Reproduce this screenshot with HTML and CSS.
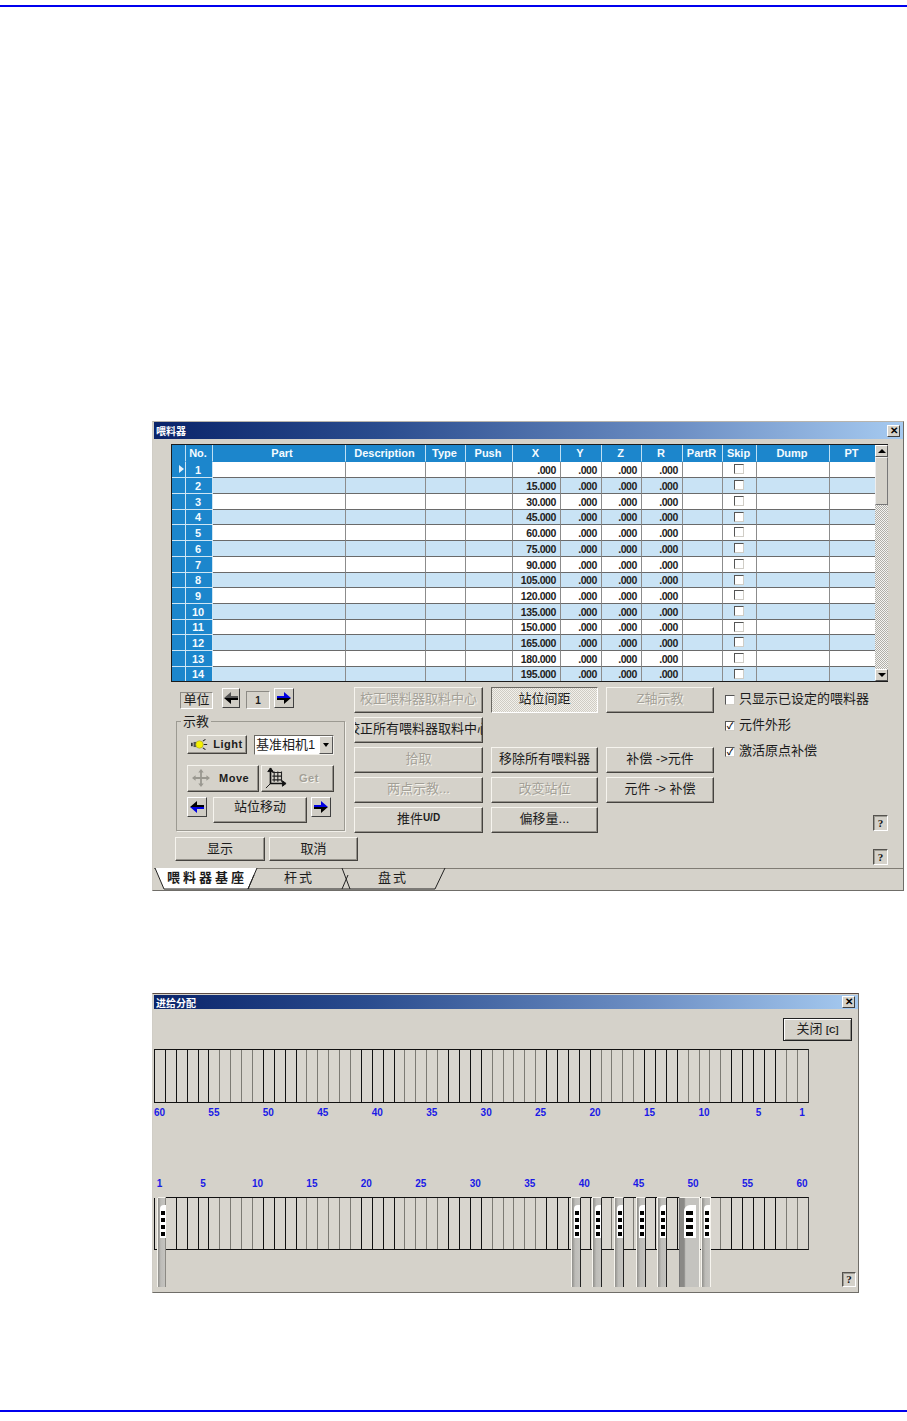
FILE: index.html
```html
<!DOCTYPE html>
<html lang="zh">
<head>
<meta charset="utf-8">
<title>喂料器</title>
<link rel="stylesheet" href="styles.css">
</head>
<body>
<svg class="sprite" width="0" height="0" aria-hidden="true">
  <symbol id="ar" viewBox="0 0 14 12"><path d="M0 4h7V0l7 6H0z" fill="#0000e0"/><path d="M0 6h14l-7 6V8H0z" fill="#000"/></symbol>
  <symbol id="al" viewBox="0 0 14 12"><path d="M14 4H7V0L0 6h14z" fill="#000"/><path d="M14 6H0l7 6V8h7z" fill="#0000e0"/></symbol>
  <symbol id="ad" viewBox="0 0 14 12"><path d="M14 4H7V0L0 6h14z" fill="#555"/><path d="M14 6H0l7 6V8h7z" fill="#000"/></symbol>
</svg>
<div class="page">
  <div class="rule rule-top"></div>

  <section class="dialog dlg-feeder">
    <header class="title title-a"><span>喂料器</span><b class="x">✕</b></header>
    <div class="tablewrap">
      <table class="tbl">
        <colgroup><col class="c0"><col class="c1"><col class="c2"><col class="c3"><col class="c4"><col class="c5"><col class="c6"><col class="c7"><col class="c8"><col class="c9"><col class="c10"><col class="c11"><col class="c12"><col class="c13"></colgroup>
        <thead><tr><th></th><th>No.</th><th class="th-part">Part</th><th>Description</th><th>Type</th><th>Push</th><th>X</th><th>Y</th><th>Z</th><th>R</th><th>PartR</th><th>Skip</th><th>Dump</th><th>PT</th></tr></thead>
        <tbody>
          <tr><td class="ind cur"></td><td class="no">1</td><td></td><td></td><td></td><td></td><td class="n">.000</td><td class="n">.000</td><td class="n">.000</td><td class="n">.000</td><td></td><td class="k"><i class="box"></i></td><td></td><td></td></tr>
          <tr><td class="ind"></td><td class="no">2</td><td></td><td></td><td></td><td></td><td class="n">15.000</td><td class="n">.000</td><td class="n">.000</td><td class="n">.000</td><td></td><td class="k"><i class="box"></i></td><td></td><td></td></tr>
          <tr><td class="ind"></td><td class="no">3</td><td></td><td></td><td></td><td></td><td class="n">30.000</td><td class="n">.000</td><td class="n">.000</td><td class="n">.000</td><td></td><td class="k"><i class="box"></i></td><td></td><td></td></tr>
          <tr class="s"><td class="ind"></td><td class="no">4</td><td></td><td></td><td></td><td></td><td class="n">45.000</td><td class="n">.000</td><td class="n">.000</td><td class="n">.000</td><td></td><td class="k"><i class="box"></i></td><td></td><td></td></tr>
          <tr><td class="ind"></td><td class="no">5</td><td></td><td></td><td></td><td></td><td class="n">60.000</td><td class="n">.000</td><td class="n">.000</td><td class="n">.000</td><td></td><td class="k"><i class="box"></i></td><td></td><td></td></tr>
          <tr><td class="ind"></td><td class="no">6</td><td></td><td></td><td></td><td></td><td class="n">75.000</td><td class="n">.000</td><td class="n">.000</td><td class="n">.000</td><td></td><td class="k"><i class="box"></i></td><td></td><td></td></tr>
          <tr><td class="ind"></td><td class="no">7</td><td></td><td></td><td></td><td></td><td class="n">90.000</td><td class="n">.000</td><td class="n">.000</td><td class="n">.000</td><td></td><td class="k"><i class="box"></i></td><td></td><td></td></tr>
          <tr class="s"><td class="ind"></td><td class="no">8</td><td></td><td></td><td></td><td></td><td class="n">105.000</td><td class="n">.000</td><td class="n">.000</td><td class="n">.000</td><td></td><td class="k"><i class="box"></i></td><td></td><td></td></tr>
          <tr><td class="ind"></td><td class="no">9</td><td></td><td></td><td></td><td></td><td class="n">120.000</td><td class="n">.000</td><td class="n">.000</td><td class="n">.000</td><td></td><td class="k"><i class="box"></i></td><td></td><td></td></tr>
          <tr><td class="ind"></td><td class="no">10</td><td></td><td></td><td></td><td></td><td class="n">135.000</td><td class="n">.000</td><td class="n">.000</td><td class="n">.000</td><td></td><td class="k"><i class="box"></i></td><td></td><td></td></tr>
          <tr class="s"><td class="ind"></td><td class="no">11</td><td></td><td></td><td></td><td></td><td class="n">150.000</td><td class="n">.000</td><td class="n">.000</td><td class="n">.000</td><td></td><td class="k"><i class="box"></i></td><td></td><td></td></tr>
          <tr><td class="ind"></td><td class="no">12</td><td></td><td></td><td></td><td></td><td class="n">165.000</td><td class="n">.000</td><td class="n">.000</td><td class="n">.000</td><td></td><td class="k"><i class="box"></i></td><td></td><td></td></tr>
          <tr><td class="ind"></td><td class="no">13</td><td></td><td></td><td></td><td></td><td class="n">180.000</td><td class="n">.000</td><td class="n">.000</td><td class="n">.000</td><td></td><td class="k"><i class="box"></i></td><td></td><td></td></tr>
          <tr class="s"><td class="ind"></td><td class="no">14</td><td></td><td></td><td></td><td></td><td class="n">195.000</td><td class="n">.000</td><td class="n">.000</td><td class="n">.000</td><td></td><td class="k"><i class="box"></i></td><td></td><td></td></tr>
        </tbody>
      </table>
      <div class="vscroll">
        <div class="sb-btn sb-up"></div>
        <div class="sb-thumb"></div>
        <div class="sb-track"></div>
        <div class="sb-btn sb-down"></div>
      </div>
    </div>

    <div class="lower">
      <div class="upper">
        <div class="leftpanel">
          <div class="unitrow">
            <span class="unit">单位</span>
            <span class="arrowbtn a-prev"><svg class="ar"><use href="#ad"/></svg></span>
            <span class="numbox">1</span>
            <span class="arrowbtn a-next"><svg class="ar"><use href="#ar"/></svg></span>
          </div>
          <fieldset class="group">
            <legend>示教</legend>
            <div class="grow g1">
              <button class="btn b-light">
                <svg class="ic-light" viewBox="0 0 20 12"><rect x="0" y="4" width="2" height="4" fill="#333"/><rect x="3" y="3" width="3" height="6" fill="#555"/><circle cx="10" cy="6" r="4.4" fill="#f5f000" stroke="#8a8a30" stroke-width=".6"/><path d="M14 2l3-2M15 6h4M14 10l3 2" stroke="#222" stroke-width="1.2"/></svg>
                <span class="lat">Light</span>
              </button>
              <div class="combo"><span class="combo-text">基准相机1</span><span class="combo-btn"></span></div>
            </div>
            <div class="grow g2">
              <button class="btn b-move">
                <svg class="ic-move" viewBox="0 0 20 20"><path d="M10 0l3 4h-2v5h5V7l4 3-4 3v-2h-5v5h2l-3 4-3-4h2v-5H4v2l-4-3 4-3v2h5V4H7z" fill="#9a9890"/></svg>
                <span class="lat">Move</span>
              </button>
              <button class="btn b-get dis">
                <svg class="ic-get" viewBox="0 0 24 24"><path d="M6 1v17h16" fill="none" stroke="#111" stroke-width="1.8"/><path d="M6 1L3 5h6zM23 18l-4-3v6zM1 23l5-5" fill="#111" stroke="#111"/><path d="M8 6h10M8 10h10M8 14h10M10 5v11M14 5v11M18 5v11" stroke="#222" stroke-width="1.2"/></svg>
                <span class="lat">Get</span>
              </button>
            </div>
            <div class="grow g3">
              <span class="arrowbtn"><svg class="ar"><use href="#al"/></svg></span>
              <button class="btn b-station">站位移动</button>
              <span class="arrowbtn"><svg class="ar"><use href="#ar"/></svg></span>
            </div>
          </fieldset>
        </div>

        <div class="btngrid">
          <button class="btn dis">校正喂料器取料中心</button>
          <button class="btn pressed">站位间距</button>
          <button class="btn dis">Z轴示教</button>
          <button class="btn">校正所有喂料器取料中心</button>
          <span></span>
          <span></span>
          <button class="btn dis">拾取</button>
          <button class="btn">移除所有喂料器</button>
          <button class="btn">补偿 -&gt;元件</button>
          <button class="btn dis">两点示教...</button>
          <button class="btn dis">改变站位</button>
          <button class="btn">元件 -&gt; 补偿</button>
          <button class="btn">推件<b class="ud">U/D</b></button>
          <button class="btn">偏移量...</button>
        </div>

        <div class="options">
          <label class="opt"><i class="box"></i>只显示已设定的喂料器</label>
          <label class="opt"><i class="box on">✓</i>元件外形</label>
          <label class="opt"><i class="box on">✓</i>激活原点补偿</label>
          <span class="help h-up">?</span>
        </div>
      </div>

      <div class="footrow">
        <button class="btn b-foot1">显示</button>
        <button class="btn b-foot2">取消</button>
        <span class="help h-down">?</span>
      </div>
    </div>

    <div class="tabs">
      <svg class="tabshape" viewBox="0 0 749 22" aria-hidden="true">
        <path d="M0 .5H749" stroke="#807c74" fill="none"/>
        <path d="M1 0L10 21H94L103 0z" fill="#fff"/>
        <path d="M1 0L10 21H281L291 0M94 21l9-21M94 21l6-14M188 0L196 21M188 21l6-14" fill="none" stroke="#222"/>
      </svg>
      <span class="tab tab1">喂料器基座</span>
      <span class="tab tab2">杆式</span>
      <span class="tab tab3">盘式</span>
    </div>
  </section>

  <section class="dialog dlg-assign">
    <header class="title title-b"><span>进给分配</span><b class="x">✕</b></header>
    <div class="closerow"><button class="btn-close">关闭 <b>[C]</b></button></div>

    <div class="strip strip-up">
      <i></i><i></i><i></i><i></i><i></i><i></i><i></i><i></i><i></i><i></i><i></i><i></i><i></i><i></i><i></i>
      <i></i><i></i><i></i><i></i><i></i><i></i><i></i><i></i><i></i><i></i><i></i><i></i><i></i><i></i><i></i>
      <i></i><i></i><i></i><i></i><i></i><i></i><i></i><i></i><i></i><i></i><i></i><i></i><i></i><i></i><i></i>
      <i></i><i></i><i></i><i></i><i></i><i></i><i></i><i></i><i></i><i></i><i></i><i></i><i></i><i></i><i></i>
    </div>
    <div class="labels labels-up">
      <span class="s5">60</span><span class="s5">55</span><span class="s5">50</span><span class="s5">45</span><span class="s5">40</span><span class="s5">35</span><span class="s5">30</span><span class="s5">25</span><span class="s5">20</span><span class="s5">15</span><span class="s5">10</span><span class="s4">5</span><span class="s1">1</span>
    </div>

    <div class="labels labels-down">
      <span class="s4">1</span><span class="s5">5</span><span class="s5">10</span><span class="s5">15</span><span class="s5">20</span><span class="s5">25</span><span class="s5">30</span><span class="s5">35</span><span class="s5">40</span><span class="s5">45</span><span class="s5">50</span><span class="s5">55</span><span class="s1">60</span>
    </div>
    <div class="deck">
      <div class="deckwrap">
        <div class="strip">
          <i></i><i></i><i></i><i></i><i></i><i></i><i></i><i></i><i></i><i></i><i></i><i></i><i></i><i></i><i></i>
          <i></i><i></i><i></i><i></i><i></i><i></i><i></i><i></i><i></i><i></i><i></i><i></i><i></i><i></i><i></i>
          <i></i><i></i><i></i><i></i><i></i><i></i><i></i><i></i><i></i><i></i><i></i><i></i><i></i><i></i><i></i>
          <i></i><i></i><i></i><i></i><i></i><i></i><i></i><i></i><i></i><i></i><i></i><i></i><i></i><i></i><i></i>
        </div>
        <div class="feeder f1"><div class="head"></div></div>
        <div class="feeder f2"><div class="head"></div></div>
        <div class="feeder f3"><div class="head"></div></div>
        <div class="feeder f4"><div class="head"></div></div>
        <div class="feeder f5"><div class="head"></div></div>
        <div class="feeder f6"><div class="head"></div></div>
        <div class="feeder f7 wide"><div class="head"></div></div>
        <div class="feeder f8"><div class="head"></div></div>
      </div>
      <span class="help h-deck">?</span>
    </div>
  </section>

  <div class="rule rule-bottom"></div>
</div>
</body>
</html>
```

FILE: styles.css
```css
* { box-sizing: border-box; }
html, body { margin: 0; padding: 0; background: #fff; }
body { font-family: "Liberation Sans", "Noto Sans CJK SC", sans-serif; font-size: 13px; color: #1c1c1c; }
.sprite { position: absolute; }
.page { width: 907px; height: 1421px; display: flex; flex-direction: column; overflow: hidden; }

.rule { height: 2px; background: #0000ee; flex: none; }
.rule-top { margin-top: 5px; }
.rule-bottom { margin-top: auto; margin-bottom: 9px; }

.dialog { flex: none; margin-left: 152px; background: #d5d2ca; border: 1px solid; border-color: #b8b4ac #6f6d68 #6f6d68 #d0cdc6; }
.dlg-feeder { width: 752px; height: 470px; margin-top: 414px; padding-left: 1px; }
.dlg-assign { width: 707px; height: 300px; margin-top: 102px; padding: 1px 0 0 1px; border-top-color: #5a4a44; }

.title { display: flex; align-items: center; justify-content: space-between; color: #fff; font-weight: 700; font-size: 10px; padding: 0 3px 0 2px; background: linear-gradient(90deg, #0a246a 0, #2a4c8e 30%, #6d8fc4 70%, #a6caf0 100%); }
.title-a { height: 17px; }
.title-b { height: 14px; }
.x { width: 13px; height: 12px; display: flex; align-items: center; justify-content: center; background: #d5d2ca; color: #000; font-size: 10px; line-height: 1; border: 1px solid; border-color: #fff #404040 #404040 #fff; }

.tablewrap { display: flex; width: 717px; height: 238px; margin: 5px 0 0 17px; border: 1px solid #1c1c1c; border-right: 0; overflow: hidden; }
.tbl { width: 703px; table-layout: fixed; border-collapse: separate; border-spacing: 0; flex: none; }
.c0 { width: 14px; } .c1 { width: 27px; } .c2 { width: 133px; } .c3 { width: 80px; } .c4 { width: 40px; } .c5 { width: 47px; } .c6 { width: 48px; } .c7 { width: 41px; } .c8 { width: 40px; } .c9 { width: 41px; } .c10 { width: 40px; } .c11 { width: 34px; } .c12 { width: 73px; } .c13 { width: 45px; }
.tbl th { height: 17px; padding: 0 2px 0 0; background: #1c86cc; color: #f4fbff; font-size: 11px; font-weight: 700; line-height: 13px; border-right: 1px solid #bfe0f4; border-bottom: 1px solid #1c86cc; }
.tbl th.th-part { padding-left: 8px; }
.tbl td { height: 16px; padding: 0; border-right: 1px solid #8c8c8c; border-bottom: 1px solid #6a6a6a; font-size: 10.5px; line-height: 12px; background: #fff; }
.tbl tr.s td { height: 15px; }
.tbl tbody tr:nth-child(even) td { background: #c9e3f5; }
.tbl td:last-child, .tbl th:last-child { border-right: 0; }
.tbl tbody td.ind, .tbl tbody td.no, .tbl tbody tr:nth-child(even) td.ind, .tbl tbody tr:nth-child(even) td.no { background: #1c86cc; border-right-color: #cfe6f4; border-bottom-color: #cfe6f4; }
.tbl td.no { color: #f4fbff; font-weight: 700; font-size: 11px; text-align: center; padding-right: 2px; }
.tbl td.n { text-align: right; padding-right: 4px; font-weight: 700; letter-spacing: -.4px; color: #222; }
.tbl td.k { text-align: center; padding-right: 2px; }
.k .box { margin-top: -3px; }
.cur { position: relative; }
.cur::after { content: ""; position: absolute; left: 7px; top: 3px; border-left: 5px solid #e6f2fa; border-top: 4px solid transparent; border-bottom: 4px solid transparent; }

.box { display: inline-block; width: 10px; height: 10px; background: #fff; border: 1px solid; border-color: #555 #d0cdc6 #d0cdc6 #555; vertical-align: middle; font-style: normal; }
.box.on { font-size: 9px; line-height: 8px; font-weight: 700; text-align: center; color: #111; }

.vscroll { width: 13px; flex: none; display: flex; flex-direction: column; }
.sb-btn { height: 12px; flex: none; display: flex; align-items: center; justify-content: center; background: #d5d2ca; border: 1px solid; border-color: #fff #555 #555 #fff; }
.sb-up::before { content: ""; border-bottom: 4px solid #000; border-left: 4px solid transparent; border-right: 4px solid transparent; }
.sb-down::before { content: ""; border-top: 4px solid #000; border-left: 4px solid transparent; border-right: 4px solid transparent; }
.sb-thumb { height: 48px; flex: none; background: #d5d2ca; border: 1px solid; border-color: #eee #777 #777 #eee; }
.sb-track { flex: 1; background: repeating-conic-gradient(#f4f4f2 0 25%, #b0aea8 0 50%) 0 0 / 2px 2px; }

.lower { margin-top: 5px; padding: 0 15px 0 21px; }
.upper { display: flex; height: 146px; }
.leftpanel { width: 179px; flex: none; }
.unitrow { height: 28px; padding: 1px 0 0 5px; display: flex; align-items: flex-start; }
.unit { width: 33px; height: 17px; margin-top: 4px; padding-bottom: 2px; display: flex; align-items: center; justify-content: center; border: 1px solid; border-color: #8c8a84 #fff #fff #8c8a84; font-size: 13px; line-height: 1; }
.arrowbtn { width: 20px; height: 20px; flex: none; display: flex; align-items: center; justify-content: center; background: #cfccc4; border: 1px solid; border-color: #fff #404040 #404040 #fff; }
.a-prev { margin-left: 9px; width: 18px; }
.a-next { margin-left: 4px; }
.ar { width: 14px; height: 12px; display: block; }
.numbox { width: 24px; height: 18px; margin: 3px 0 0 6px; display: flex; align-items: center; justify-content: center; font-size: 10px; font-weight: 700; border: 1px solid; border-color: #8c8a84 #fff #fff #8c8a84; }

.group { width: 169px; height: 116px; margin: 0 0 0 1px; padding: 7px 0 0 10px; border: 1px solid #9c9a92; box-shadow: 1px 1px 0 #f2f0ea; min-width: 0; }
.group legend { padding: 0 2px; margin-left: -6px; font-size: 13px; line-height: 13px; }
.grow { display: flex; align-items: flex-start; }
.g2 { margin-top: 10px; gap: 2px; }
.g3 { margin-top: 5px; }

.btn { display: flex; align-items: center; justify-content: center; padding: 0 0 4px; margin: 0; overflow: hidden; white-space: nowrap; font: 13px/1 "Liberation Sans", "Noto Sans CJK SC", sans-serif; color: #1c1c1c; background: #d5d2ca; border: 1px solid; border-color: #f6f4ee #45433f #45433f #f6f4ee; box-shadow: inset -1px -1px 0 #95928b; }
.btn.dis { color: #a3a097; text-shadow: 1px 1px 0 #f6f4ee; }
.btn.pressed { background: repeating-conic-gradient(#f2f0ea 0 25%, #cfccc4 0 50%) 0 0 / 2px 2px; border-color: #6a6862 #fff #fff #6a6862; box-shadow: none; }
.btngrid { display: grid; grid-template-columns: 129px 107px 108px; grid-auto-rows: 26px; column-gap: 8px; row-gap: 4px; flex: none; }
.ud { font-size: 10px; }
.lat { font-weight: 700; font-size: 11px; letter-spacing: .5px; }

.b-light { width: 60px; height: 19px; gap: 5px; padding: 0; }
.ic-light { width: 17px; height: 11px; }
.combo { width: 80px; height: 20px; margin-left: 7px; display: flex; background: #fff; border: 1px solid; border-color: #6a6862 #f2f0ea #f2f0ea #6a6862; }
.combo-text { flex: 1; font-size: 13px; line-height: 18px; padding-left: 1px; white-space: nowrap; overflow: hidden; }
.combo-btn { width: 14px; flex: none; display: flex; align-items: center; justify-content: center; background: #d5d2ca; border: 1px solid; border-color: #fff #555 #555 #fff; }
.combo-btn::before { content: ""; border-top: 4px solid #000; border-left: 3px solid transparent; border-right: 3px solid transparent; }
.b-move { width: 72px; height: 27px; gap: 9px; padding: 0 0 1px 4px; justify-content: flex-start; }
.ic-move { width: 18px; height: 18px; }
.b-get { width: 73px; height: 27px; gap: 12px; padding: 0 0 1px 3px; justify-content: flex-start; }
.ic-get { width: 22px; height: 22px; }
.b-station { width: 94px; height: 26px; margin: 0 4px 0 6px; padding-bottom: 7px; }

.options { flex: 1; margin-left: 11px; padding-top: 4px; display: flex; flex-direction: column; }
.opt { height: 16px; margin-bottom: 10px; display: flex; align-items: center; gap: 4px; font-size: 13px; white-space: nowrap; line-height: 14px; }
.opt .box { flex: none; margin-top: 1px; }
.help { width: 15px; height: 16px; display: flex; align-items: center; justify-content: center; font: 700 11px/1 "Liberation Serif", serif; color: #111; background: #d5d2ca; border: 1px solid; border-color: #55534e #fff #fff #55534e; box-shadow: inset 1px 1px 0 #9c9a92; }
.h-up { margin-top: auto; margin-bottom: 2px; align-self: flex-end; }

.footrow { display: flex; height: 28px; margin-top: 4px; align-items: flex-start; }
.b-foot1 { width: 90px; height: 24px; padding-bottom: 2px; }
.b-foot2 { width: 89px; height: 24px; margin-left: 4px; padding-bottom: 2px; }
.h-down { margin-left: auto; align-self: flex-end; }

.tabs { position: relative; height: 22px; margin-top: 3px; }
.tabshape { position: absolute; left: 0; top: 0; width: 749px; height: 22px; }
.tab { position: absolute; top: 2px; font-size: 13px; line-height: 16px; letter-spacing: 1px; }
.tab1 { left: 13px; font-weight: 700; letter-spacing: 3px; }
.tab2 { left: 130px; letter-spacing: 2px; }
.tab3 { left: 224px; letter-spacing: 2px; }

.closerow { display: flex; justify-content: flex-end; margin: 9px 6px 0 0; }
.btn-close { width: 69px; height: 23px; padding: 0 0 2px; font: 13px/1 "Liberation Sans", "Noto Sans CJK SC", sans-serif; color: #222; background: #d5d2ca; border: 1px solid #222; box-shadow: inset 1px 1px 0 #fff, inset -1px -1px 0 #8e8c85; }
.btn-close b { font-size: 9px; }

.strip { width: 655px; height: 54px; display: grid; grid-template-columns: repeat(60, 10.9px); background: #d8d5ce; border-top: 1px solid #111; border-bottom: 1px solid #111; border-right: 1px solid #444; }
.strip-up { margin-top: 8px; }
.strip i { display: block; border-left: 1px solid #111; }
.strip i:is(:nth-child(n+7):nth-child(-n+10), :nth-child(n+15):nth-child(-n+19), :nth-child(n+24):nth-child(-n+27), :nth-child(n+32):nth-child(-n+36), :nth-child(n+42):nth-child(-n+45), :nth-child(n+50):nth-child(-n+53), :nth-child(n+59)) { border-left-color: #7c7a74; }

.labels { width: 654px; height: 12px; display: grid; grid-template-columns: repeat(60, 10.9px); }
.labels span { width: 10.9px; display: flex; justify-content: center; font-size: 10px; font-weight: 700; line-height: 12px; color: #1a1ae6; white-space: nowrap; }
.s5 { grid-column: span 5; }
.s4 { grid-column: span 4; }
.s1 { grid-column: span 1; }
.labels-up { margin-top: 4px; }
.labels-down { margin-top: 59px; }

.deck { display: flex; height: 90px; margin-top: 7px; }
.deckwrap { position: relative; width: 655px; height: 90px; flex: none; }
.deck .strip { height: 53px; }
.feeder { position: absolute; top: 0; width: 10px; height: 90px; padding: 7px 0 0 2px; background: linear-gradient(90deg, #8f8e8a 0, #bdbcb8 40%, #c4c3bf 100%); border-left: 1px solid #f6f4ee; border-right: 1px solid #222; border-top: 1px solid #f6f4ee; }
.head { width: 6px; height: 33px; border-radius: 4px 0 0 0; padding: 6px 1px 2px 1px; background: repeating-linear-gradient(180deg, #000 0 4px, #fff 4px 7px) content-box, #fff; }
.f1 { left: 3px; width: 9px; border-right-color: #8c8a84; }
.f1::before { content: ""; position: absolute; left: -4px; top: -1px; width: 4px; height: 1px; background: #d5d2ca; }
.f2 { left: 417px; }
.f3 { left: 438px; }
.f4 { left: 460px; }
.f5 { left: 482px; }
.f6 { left: 503px; }
.f7 { left: 525px; }
.f8 { left: 547px; border-right-color: #f6f4ee; }
.wide { width: 21px; padding: 7px 0 0 4px; border-right-color: #f6f4ee; border-left-color: #777; background: linear-gradient(90deg, #8a8986 0, #8a8986 22%, #c4c3bf 30%); }
.wide .head { width: 12px; border-radius: 6px 0 0 0; padding: 6px 3px 2px 2px; }
.h-deck { margin-left: 33px; margin-bottom: 0; align-self: flex-end; width: 14px; height: 15px; }
```
